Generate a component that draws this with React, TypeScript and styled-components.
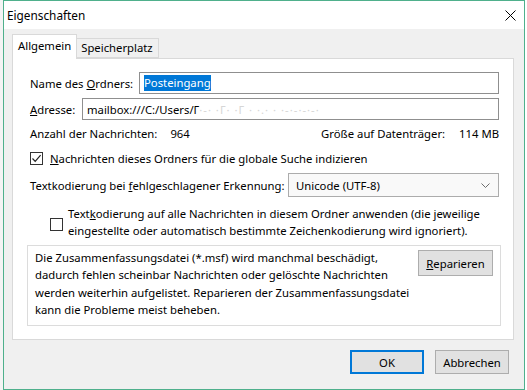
import React from "react";
import styled, { createGlobalStyle } from "styled-components";

const Global = createGlobalStyle`
  html, body { margin: 0; padding: 0; background: #ffffff; }
  body { font-family: "Noto Sans", "Liberation Sans", sans-serif; font-size: 11.3px; color: #000; }
  * { box-sizing: border-box; }
`;

const Page = styled.div`
  display: flex;
  width: 527px;
  height: 390px;
  overflow: hidden;
  background: #ffffff;
`;

const Backdrop = styled.div`
  width: 3px;
  flex: none;
  background: #f4f4f4;
`;

const Window = styled.div`
  width: 522px;
  height: 390px;
  border: 1px solid #4fb08c;
  background: #f0f0f0;
  display: flex;
  flex-direction: column;
`;

const TitleBar = styled.div`
  height: 28px;
  background: #ffffff;
  display: flex;
  align-items: center;
  justify-content: space-between;
  padding: 0 8px 0 3px;
  font-size: 11.8px;
`;

const CloseIcon = () => (
  <svg width="11" height="11" viewBox="0 0 11 11">
    <path d="M0.5 0.5 L10.5 10.5 M10.5 0.5 L0.5 10.5" stroke="#000" strokeWidth="1" fill="none" />
  </svg>
);

const Body = styled.div`
  padding: 5px 9px 0 8px;
  display: flex;
  flex-direction: column;
`;

const TabStrip = styled.div`
  display: flex;
  align-items: flex-end;
  height: 24px;
`;

const Tab = styled.div<{ $active?: boolean }>`
  position: relative;
  z-index: ${(p) => (p.$active ? 2 : 1)};
  height: ${(p) => (p.$active ? "25px" : "20px")};
  margin-bottom: ${(p) => (p.$active ? "-1px" : "0")};
  padding: ${(p) => (p.$active ? "3px 5px 0 5px" : "1px 5px 0 4px")};
  background: ${(p) => (p.$active ? "#ffffff" : "#f0f0f0")};
  border: 1px solid #d9d9d9;
  border-bottom: ${(p) => (p.$active ? "none" : "1px solid #d9d9d9")};
  border-left: ${(p) => (p.$active ? "1px solid #d9d9d9" : "none")};
  white-space: nowrap;
`;

const Panel = styled.div`
  width: 502px;
  height: 282px;
  border: 1px solid #d9d9d9;
  background: #ffffff;
  padding: 0 12px 0 14px;
  display: flex;
  flex-direction: column;
`;

const Row = styled.div<{ $top: number }>`
  display: flex;
  align-items: center;
  margin-top: ${(p) => p.$top}px;
  padding: 0 2px 0 3px;
  white-space: nowrap;
`;

const Label = styled.span<{ $w?: number }>`
  flex: none;
  width: ${(p) => (p.$w ? `${p.$w}px` : "auto")};
`;

const TextInput = styled.div`
  flex: 1;
  height: 22px;
  border: 1px solid #8f8f8f;
  background: #ffffff;
  display: flex;
  align-items: center;
  padding-left: 4px;
  overflow: hidden;
  white-space: nowrap;
`;

const Selected = styled.span`
  background: #0078d7;
  color: #ffffff;
  line-height: 16px;
`;

const Faint = styled.span`
  color: #d6d6d6;
  letter-spacing: 1px;
`;

const Group = styled.span<{ $gap: number }>`
  display: flex;
  gap: ${(p) => p.$gap}px;
`;

const Spread = styled(Row)`
  justify-content: space-between;
  height: 16px;
`;

const Box = styled.span`
  flex: none;
  width: 13px;
  height: 13px;
  border: 1px solid #333333;
  background: #ffffff;
  display: inline-flex;
  align-items: center;
  justify-content: center;
`;

const Check = () => (
  <svg width="11" height="11" viewBox="0 0 11 11">
    <path d="M1.5 5.5 L4.2 8.3 L9.6 2.2" stroke="#222" strokeWidth="1.2" fill="none" />
  </svg>
);

const CheckRow = styled(Row)`
  height: 18px;
  gap: 7px;
`;

const Select = styled.div`
  margin-left: auto;
  width: 211px;
  height: 24px;
  border: 1px solid #acacac;
  background: #f9f9f9;
  display: flex;
  align-items: center;
  justify-content: space-between;
  padding: 0 8px 0 7px;
`;

const Chevron = () => (
  <svg width="9" height="5" viewBox="0 0 9 5">
    <path d="M0.5 0.5 L4.5 4.5 L8.5 0.5" stroke="#6d6d6d" strokeWidth="1" fill="none" />
  </svg>
);

const WrapRow = styled.div`
  display: flex;
  align-items: flex-start;
  margin-top: 8px;
  padding-left: 23px;
  gap: 5px;
  line-height: 17px;
  white-space: nowrap;
`;

const BoxSlot = styled.span`
  padding-top: 13px;
  display: flex;
`;

const InfoBox = styled.div`
  margin-top: 6px;
  height: 81px;
  border: 1px solid #dcdcdc;
  background: #ffffff;
  display: flex;
  justify-content: space-between;
  align-items: flex-start;
  padding: 3px 7px 0 7px;
`;

const InfoText = styled.div`
  line-height: 17.3px;
  white-space: nowrap;
`;

const Button = styled.div<{ $default?: boolean; $w?: number }>`
  flex: none;
  width: ${(p) => p.$w ?? 75}px;
  height: 24px;
  background: #e1e1e1;
  border: ${(p) => (p.$default ? "2px solid #0078d7" : "1px solid #adadad")};
  display: flex;
  align-items: center;
  justify-content: center;
`;

const RepairButton = styled(Button)`
  margin-top: 1px;
  height: 26px;
`;

const Footer = styled.div`
  display: flex;
  justify-content: flex-end;
  gap: 11px;
  padding: 10px 6px 0 0;
`;

export default function App() {
  return (
    <>
      <Global />
      <Page>
        <Backdrop />
        <Window>
          <TitleBar>
            <span>Eigenschaften</span>
            <CloseIcon />
          </TitleBar>
          <Body>
            <TabStrip>
              <Tab $active>Allgemein</Tab>
              <Tab>Speicherplatz</Tab>
            </TabStrip>
            <Panel>
              <Row $top={13}>
                <Label $w={109}>
                  Name des <u>O</u>rdners:
                </Label>
                <TextInput>
                  <Selected>Posteingang</Selected>
                </TextInput>
              </Row>
              <Row $top={4}>
                <Label $w={52}>
                  <u>A</u>dresse:
                </Label>
                <TextInput>
                  mailbox:///C:/Users/Γ<Faint>{"      ·-·  ·Γ·    ·Γ     ·  ·.·   ·           ·-·-·-·-·  "}</Faint>
                </TextInput>
              </Row>
              <Spread $top={5}>
                <Group $gap={13}>
                  <span>Anzahl der Nachrichten:</span>
                  <span>964</span>
                </Group>
                <Group $gap={14}>
                  <span>Größe auf Datenträger:</span>
                  <span>114 MB</span>
                </Group>
              </Spread>
              <CheckRow $top={8}>
                <Box>
                  <Check />
                </Box>
                <span>
                  <u>N</u>achrichten dieses Ordners für die globale Suche indizieren
                </span>
              </CheckRow>
              <Row $top={6}>
                <span>
                  Textkodierung bei <u>f</u>ehlgeschlagener Erkennung:
                </span>
                <Select>
                  <span>Unicode (UTF-8)</span>
                  <Chevron />
                </Select>
              </Row>
              <WrapRow>
                <BoxSlot>
                  <Box />
                </BoxSlot>
                <span>
                  Text<u>k</u>odierung auf alle Nachrichten in diesem Ordner anwenden (die jeweilige
                  <br />
                  eingestellte oder automatisch bestimmte Zeichenkodierung wird ignoriert).
                </span>
              </WrapRow>
              <InfoBox>
                <InfoText>
                  Die Zusammenfassungsdatei (*.msf) wird manchmal beschädigt,
                  <br />
                  dadurch fehlen scheinbar Nachrichten oder gelöschte Nachrichten
                  <br />
                  werden weiterhin aufgelistet. Reparieren der Zusammenfassungsdatei
                  <br />
                  kann die Probleme meist beheben.
                </InfoText>
                <RepairButton $w={75}>
                  <span>
                    <u>R</u>eparieren
                  </span>
                </RepairButton>
              </InfoBox>
            </Panel>
            <Footer>
              <Button $default $w={74}>
                OK
              </Button>
              <Button $w={74}>Abbrechen</Button>
            </Footer>
          </Body>
        </Window>
      </Page>
    </>
  );
}
